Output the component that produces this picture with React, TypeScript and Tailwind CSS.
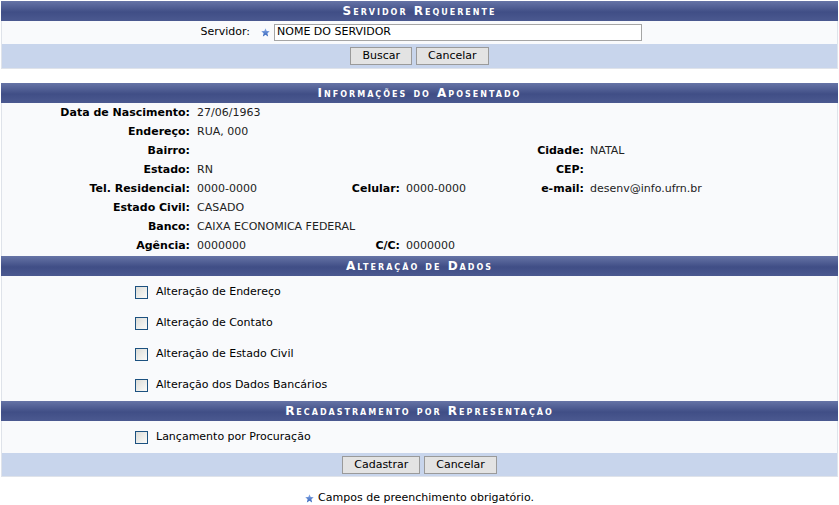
import React from "react";

const font = "font-['DejaVu_Sans',Verdana,sans-serif]";

function Star() {
  return (
    <svg width="9" height="9" viewBox="0 0 10 10" className="inline-block">
      <defs>
        <linearGradient id="st" x1="0" y1="0" x2="0" y2="1">
          <stop offset="0" stopColor="#8fb0ea" />
          <stop offset="1" stopColor="#2f5fb8" />
        </linearGradient>
      </defs>
      <polygon
        points="5,0.3 6.3,3.4 9.7,3.6 7.1,5.8 7.9,9.4 5,7.5 2.1,9.4 2.9,5.8 0.3,3.6 3.7,3.4"
        fill="url(#st)"
      />
    </svg>
  );
}

function Header({ title }: { title: string }) {
  return (
    <div className="flex h-[20px] items-center justify-center bg-[linear-gradient(to_bottom,#6674a6,#404e86_55%,#4b5990)] text-[12px] font-bold tracking-[2px] text-white [font-variant:small-caps]">
      {title}
    </div>
  );
}

function Button({ children }: { children: React.ReactNode }) {
  return (
    <button className="h-[18px] border border-[#9a9a9a] bg-[#e3e3e3] px-[11px] text-[11px] leading-[16px] text-black">
      {children}
    </button>
  );
}

function Checkbox() {
  return (
    <span className="inline-block h-[13px] w-[13px] border border-[#1c5180] bg-[linear-gradient(135deg,#dcdcd7,#fbfbf9)]" />
  );
}

function Label({ children }: { children: React.ReactNode }) {
  return <div className="pr-[7px] text-right font-bold text-black">{children}</div>;
}

function Value({ children }: { children?: React.ReactNode }) {
  return <div className="text-[#222]">{children}</div>;
}

function SideLabel({ children }: { children: React.ReactNode }) {
  return <span className="pr-[6px] font-bold text-black">{children}</span>;
}

const cols3 = "grid grid-cols-[195px_209px_184px_1fr] items-center";
const cols1 = "grid grid-cols-[195px_1fr] items-center";

export default function App() {
  return (
    <div className={`${font} min-h-[505px] bg-white px-[1px] pt-[1px] text-[11px] text-black`}>
      {/* Servidor Requerente */}
      <div>
        <Header title="Servidor Requerente" />
        <div className="flex h-[23px] items-center border-x border-[#dfe3ea] bg-[#f9fafc]">
          <div className="w-[248px] text-right">Servidor:</div>
          <div className="ml-[11px] mr-[4px] flex items-center">
            <Star />
          </div>
          <div className="flex h-[17px] w-[368px] items-center border border-[#a5a5a5] bg-white pl-[2px]">
            NOME DO SERVIDOR
          </div>
        </div>
        <div className="flex h-[25px] items-center justify-center gap-[4px] border-x border-b border-[#dfe3ea] bg-[#c8d5ec]">
          <Button>Buscar</Button>
          <Button>Cancelar</Button>
        </div>
      </div>

      <div className="mt-[14px]">
        <Header title="Informações do Aposentado" />
        <div className="grid auto-rows-[19px] items-center border-x border-[#dfe3ea] bg-[#f9fafc] pt-[1px]">
          <div className={cols1}>
            <Label>Data de Nascimento:</Label>
            <Value>27/06/1963</Value>
          </div>
          <div className={cols1}>
            <Label>Endereço:</Label>
            <Value>RUA, 000</Value>
          </div>
          <div className={cols3}>
            <Label>Bairro:</Label>
            <div />
            <div className="text-right">
              <SideLabel>Cidade:</SideLabel>
            </div>
            <Value>NATAL</Value>
          </div>
          <div className={cols3}>
            <Label>Estado:</Label>
            <Value>RN</Value>
            <div className="text-right">
              <SideLabel>CEP:</SideLabel>
            </div>
            <Value />
          </div>
          <div className={cols3}>
            <Label>Tel. Residencial:</Label>
            <div className="flex justify-between">
              <span className="text-[#222]">0000-0000</span>
              <SideLabel>Celular:</SideLabel>
            </div>
            <div className="flex justify-between">
              <span className="text-[#222]">0000-0000</span>
              <SideLabel>e-mail:</SideLabel>
            </div>
            <Value>desenv@info.ufrn.br</Value>
          </div>
          <div className={cols1}>
            <Label>Estado Civil:</Label>
            <Value>CASADO</Value>
          </div>
          <div className={cols1}>
            <Label>Banco:</Label>
            <Value>CAIXA ECONOMICA FEDERAL</Value>
          </div>
          <div className="grid grid-cols-[195px_209px_1fr] items-center">
            <Label>Agência:</Label>
            <div className="flex justify-between">
              <span className="text-[#222]">0000000</span>
              <SideLabel>C/C:</SideLabel>
            </div>
            <Value>0000000</Value>
          </div>
        </div>

        <Header title="Alteração de Dados" />
        <div className="flex flex-col border-x border-[#dfe3ea] bg-[#f9fafc] py-[0.5px]">
          {[
            "Alteração de Endereço",
            "Alteração de Contato",
            "Alteração de Estado Civil",
            "Alteração dos Dados Bancários",
          ].map((t) => (
            <div key={t} className="flex h-[31px] items-center pl-[133px]">
              <Checkbox />
              <span className="ml-[8px]">{t}</span>
            </div>
          ))}
        </div>

        <Header title="Recadastramento por Representação" />
        <div className="flex h-[32px] items-center border-x border-[#dfe3ea] bg-[#f9fafc] pl-[133px]">
          <Checkbox />
          <span className="ml-[8px]">Lançamento por Procuração</span>
        </div>
        <div className="flex h-[24px] items-center justify-center gap-[4px] border-x border-b border-[#dfe3ea] bg-[#c8d5ec]">
          <Button>Cadastrar</Button>
          <Button>Cancelar</Button>
        </div>
      </div>

      <div className="mt-[13px] flex items-center justify-center gap-[4px]">
        <Star />
        <span>Campos de preenchimento obrigatório.</span>
      </div>
    </div>
  );
}
